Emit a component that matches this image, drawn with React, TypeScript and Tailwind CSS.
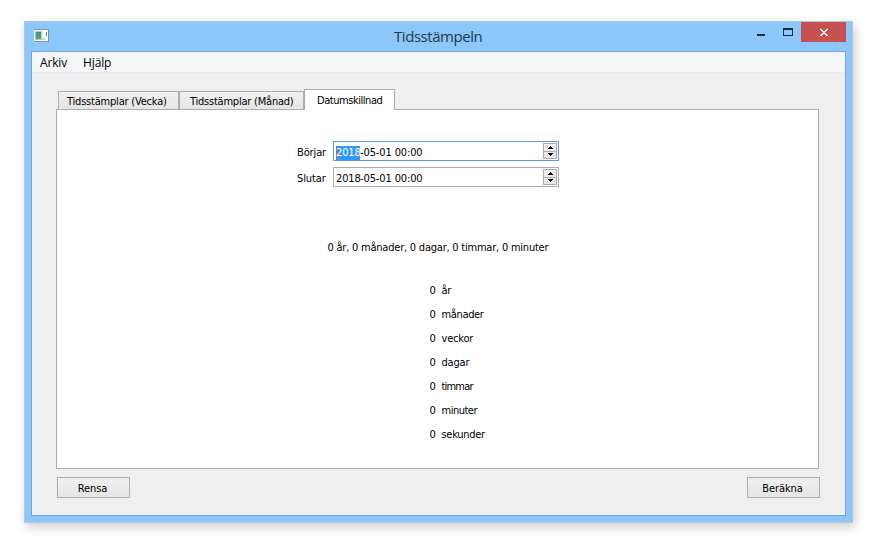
import React from "react";

const tahoma = "font-['DejaVu_Sans_Condensed','DejaVu_Sans',sans-serif] [font-stretch:condensed] text-[11px] leading-[14px]";
const segoe = "font-['Open_Sans','Noto_Sans',sans-serif] [font-stretch:normal]";

const rows: [string, string][] = [
  ["år", "tracking-[-0.2px]"],
  ["månader", "tracking-[-0.35px]"],
  ["veckor", "tracking-[-0.2px]"],
  ["dagar", "tracking-[-0.2px]"],
  ["timmar", "tracking-[-0.8px]"],
  ["minuter", "tracking-[-0.5px]"],
  ["sekunder", "tracking-[-0.3px]"],
];

function AppIcon() {
  return (
    <svg width="16" height="14" viewBox="0 0 16 14" shapeRendering="crispEdges" className="shrink-0">
      <defs>
        <linearGradient id="screen" x1="0" y1="0" x2="0.6" y2="1">
          <stop offset="0" stopColor="#4380a0" />
          <stop offset="1" stopColor="#58ac74" />
        </linearGradient>
      </defs>
      <rect x="0" y="0" width="15" height="13" fill="#8a9298" />
      <rect x="0" y="1" width="14" height="11" fill="#fbfbfb" />
      <rect x="1" y="2" width="7" height="9" fill="#b5c6cb" />
      <rect x="2" y="3" width="5" height="7" fill="url(#screen)" />
      <rect x="8" y="9" width="3" height="2" fill="#cfd4da" />
      <rect x="12" y="3" width="1" height="4" fill="#4b8e83" />
    </svg>
  );
}

function Spinner() {
  return (
    <div className="flex h-4 w-[14px] flex-col border border-[#acacac] bg-linear-to-b from-[#f0f0f0] to-[#e5e5e5]">
      <div className="flex h-2 items-center justify-center border-b border-[#acacac]">
        <svg width="5" height="3" viewBox="0 0 5 3" shapeRendering="crispEdges">
          <path d="M2 0h1v1h1v1h1v1H0V2h1V1h1z" />
        </svg>
      </div>
      <div className="flex h-[6px] items-start justify-center pt-px">
        <svg width="5" height="3" viewBox="0 0 5 3" shapeRendering="crispEdges">
          <path d="M0 0h5v1H4v1H3v1H2V2H1V1H0z" />
        </svg>
      </div>
    </div>
  );
}

function DateField({ label, focused }: { label: string; focused?: boolean }) {
  return (
    <div className="flex h-5 items-center">
      <div className="w-9 pt-[3px] tracking-[-0.12px]">{label}</div>
      <div
        className={`flex h-5 w-[226px] items-center justify-between border bg-white pr-px pl-[2px] ${
          focused ? "border-[#569de5]" : "border-[#abadb3]"
        }`}
      >
        <div className="flex items-center pt-[3px] tracking-[-0.12px]">
          {focused ? (
            <span className="w-6 bg-[#3399ff] text-white shadow-[inset_1px_0_0_#cc6600]">2018</span>
          ) : (
            <span className="w-6">2018</span>
          )}
          <span>-05-01 00:00</span>
        </div>
        <Spinner />
      </div>
    </div>
  );
}

function Button({ children }: { children: React.ReactNode }) {
  return (
    <button className="flex h-[21px] w-[73px] items-center justify-center border border-[#acacac] bg-linear-to-b from-[#f0f0f0] to-[#e5e5e5] pt-[2px] pr-[2px] tracking-[-0.1px]">
      {children}
    </button>
  );
}

export default function App() {
  return (
    <div className={`h-[544px] w-[878px] overflow-hidden bg-white pt-[21px] pl-6 text-black ${tahoma}`}>
      <div className="flex h-[502px] w-[829px] flex-col border border-[#b1c7dc] bg-[#8bc7fb] px-[6px] pb-[6px] shadow-[2px_4px_10px_rgba(0,0,0,0.2)]">
        <header className="flex h-[29px] shrink-0 items-start">
          <div className="flex w-[200px] pt-[7px] pl-[3px]">
            <AppIcon />
          </div>
          <h1 className={`flex-1 pt-[4px] pl-[163px] text-[15px] leading-[21px] tracking-[-0.45px] text-[#24384a] ${segoe}`}>
            <span>Tidsstämpeln</span>
          </h1>
          <div className="flex">
            <div className="mt-3 mr-[18px] h-[2px] w-2 bg-[#1e2a35]" />
            <div className="mt-[6px] mr-2 h-2 w-[10px] border border-t-2 border-[#1e2a35]" />
            <div className="flex h-5 w-[45px] items-center justify-center bg-[#c75050]">
              <svg width="8" height="7" viewBox="0 0 8 7" shapeRendering="crispEdges" fill="#fff">
                <path d="M0 0h2v1h1v1h2V1h1V0h2v1H7v1H6v1H5v1h1v1h1v1h1v1H6V6H5V5H3v1H2v1H0V6h1V5h1V4h1V3H2V2H1V1H0z" />
              </svg>
            </div>
          </div>
        </header>
        <main className="flex min-h-0 flex-1 flex-col border border-[#75a5d0] bg-[#efefef]">
          <nav className={`flex h-[21px] shrink-0 gap-4 border-b border-[#e7e8e9] bg-[#f5f6f7] pl-2 text-[12px] leading-[21px] tracking-[-0.15px] ${segoe}`}>
            <span>Arkiv</span>
            <span>Hjälp</span>
          </nav>
          <div className="flex flex-col pt-4 pl-6">
            <div className="z-10 -mb-px flex items-end pl-[2px]">
              <div className="mb-px flex h-[18px] w-[121px] items-center border border-b-0 border-[#acacac] bg-linear-to-b from-[#f0f0f0] to-[#e5e5e5] pt-[2px] pl-2">
                <span className="tracking-[-0.2px]">Tidsstämplar (Vecka)</span>
              </div>
              <div className="mb-px flex h-[18px] w-[125px] items-center border border-b-0 border-[#acacac] bg-linear-to-b from-[#f0f0f0] to-[#e5e5e5] pt-[2px] pl-[10px]">
                <span className="tracking-[-0.22px]">Tidsstämplar (Månad)</span>
              </div>
              <div className="flex h-[21px] w-[91px] items-center border border-b-0 border-[#acacac] bg-white pt-px pl-3">
                <span className="tracking-[-0.45px]">Datumskillnad</span>
              </div>
            </div>
            <section className="flex h-[360px] w-[763px] flex-col border border-[#acacac] bg-white">
              <div className="flex flex-col gap-[6px] pt-[31px] pl-[240px]">
                <DateField label="Börjar" focused />
                <DateField label="Slutar" />
              </div>
              <p className="mt-[54px] pl-[270.5px]">
                <span className="tracking-[-0.22px]">0 år, 0 månader, 0 dagar, 0 timmar, 0 minuter</span>
              </p>
              <div className="mt-[29px] flex flex-col gap-[10px] pl-[372.5px]">
                {rows.map(([name, tracking]) => (
                  <div key={name} className="flex">
                    <span className="w-3">0</span>
                    <span className={tracking}>{name}</span>
                  </div>
                ))}
              </div>
            </section>
            <div className="mt-2 flex w-[764px] justify-between pl-px">
              <Button>Rensa</Button>
              <Button>Beräkna</Button>
            </div>
          </div>
        </main>
      </div>
    </div>
  );
}
